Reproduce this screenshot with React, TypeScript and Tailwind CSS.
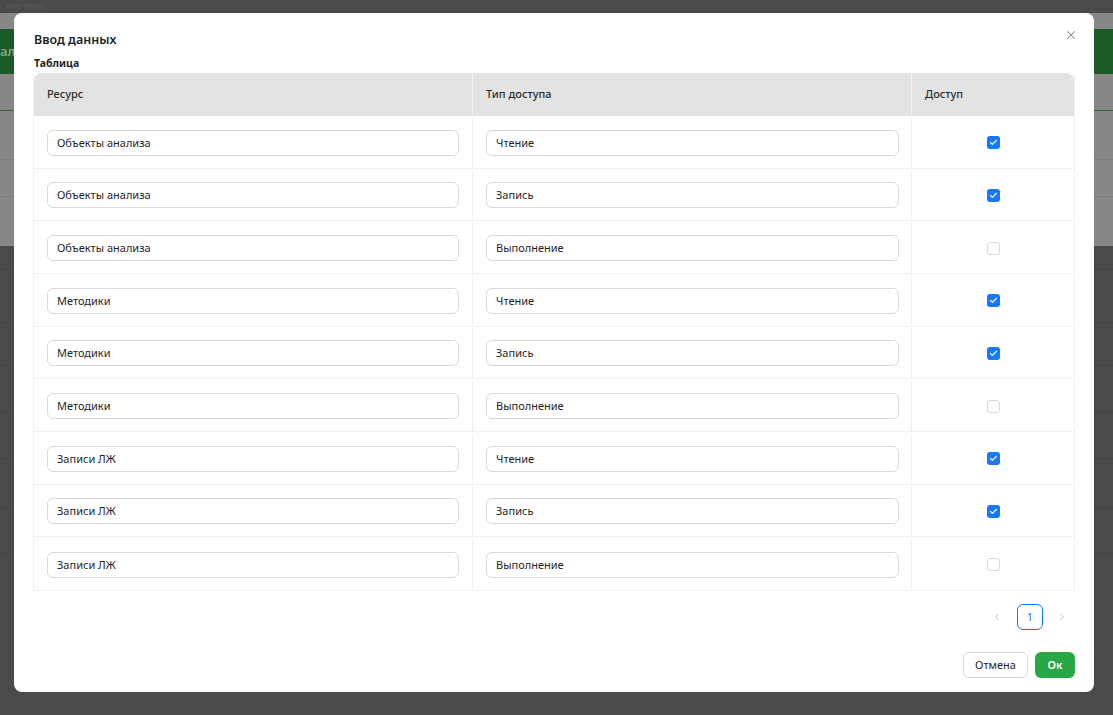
import { X, ChevronLeft, ChevronRight, Check } from "lucide-react";

type Row = { resource: string; access: string; allowed: boolean };

const ROWS: Row[] = [
  { resource: "Объекты анализа", access: "Чтение", allowed: true },
  { resource: "Объекты анализа", access: "Запись", allowed: true },
  { resource: "Объекты анализа", access: "Выполнение", allowed: false },
  { resource: "Методики", access: "Чтение", allowed: true },
  { resource: "Методики", access: "Запись", allowed: true },
  { resource: "Методики", access: "Выполнение", allowed: false },
  { resource: "Записи ЛЖ", access: "Чтение", allowed: true },
  { resource: "Записи ЛЖ", access: "Запись", allowed: true },
  { resource: "Записи ЛЖ", access: "Выполнение", allowed: false },
];

function TextInput({ value }: { value: string }) {
  return (
    <div className="h-[26px] w-full rounded-[6px] border border-[#d9d9d9] bg-white px-[9px] text-[11px] leading-[24px] text-[#1f1f1f]">
      {value}
    </div>
  );
}

function CheckBox({ checked }: { checked: boolean }) {
  return checked ? (
    <span className="flex h-[13px] w-[13px] items-center justify-center rounded-[3px] bg-[#1677ff]">
      <Check className="h-[9px] w-[9px] text-white" strokeWidth={3} />
    </span>
  ) : (
    <span className="h-[13px] w-[13px] rounded-[3px] border border-[#d9d9d9] bg-white" />
  );
}

// dimmed page behind the modal
function Backdrop() {
  return (
    <div className="flex h-full flex-col">
      <div className="h-[13px] overflow-hidden pl-[6px] pt-[1px] text-[9px] leading-[10px] text-[#5c5c5c]">ите поля</div>
      <div className="flex h-[233px] flex-col bg-[#878787]">
        <div className="mt-[16px] flex h-[45px] items-center bg-[#1c5a26] text-[13px] font-semibold text-[#7fa487]">
          ал
        </div>
        <div className="h-[36px]" />
        <div className="h-px bg-[#2e6b37]" />
        <div className="h-[48px]" />
        <div className="h-px bg-[#7a7a7a]" />
        <div className="h-[36px]" />
        <div className="h-px bg-[#7a7a7a]" />
      </div>
      <div className="flex flex-col">
        <div className="h-[23px]" />
        <div className="h-px bg-[#434343]" />
        <div className="h-[52px]" />
        <div className="h-px bg-[#434343]" />
        <div className="h-[42px]" />
        <div className="h-px bg-[#434343]" />
        <div className="h-[46px]" />
        <div className="h-px bg-[#434343]" />
        <div className="h-[45px]" />
        <div className="h-px bg-[#434343]" />
        <div className="h-[48px]" />
        <div className="h-px bg-[#434343]" />
        <div className="h-[45px]" />
        <div className="h-px bg-[#434343]" />
      </div>
    </div>
  );
}

export default function App() {
  return (
    <div
      className="relative h-[715px] w-[1113px] overflow-hidden bg-[#4a4a4a]"
      style={{ fontFamily: '"Noto Sans", "Open Sans", sans-serif' }}
    >
      <Backdrop />

      <div className="absolute left-[14px] top-[13px] flex h-[679px] w-[1080px] flex-col rounded-[8px] bg-white px-[19px] pt-[16px]">
        <button className="absolute right-[16px] top-[15px] text-[#8c8c8c]">
          <X className="h-[14px] w-[14px]" strokeWidth={1.8} />
        </button>

        <div className="h-[22px] pl-px text-[12.5px] font-semibold leading-[22px] text-[#1f1f1f]">Ввод данных</div>
        <div className="mt-[4px] h-[16px] pl-px text-[10.5px] font-bold leading-[16px] text-[#1f1f1f]">Таблица</div>

        <div className="mt-[2px] flex flex-col border-x border-b border-[#f0f0f0]">
          <div className="grid h-[43px] grid-cols-[439px_439px_1fr] rounded-t-[8px] bg-[#e3e3e3] text-[11px] font-medium text-[#2b2b2b]">
            <div className="flex items-center border-r border-[#f2f2f2] px-[13px]">Ресурс</div>
            <div className="flex items-center border-r border-[#f2f2f2] px-[13px]">Тип доступа</div>
            <div className="flex items-center px-[13px]">Доступ</div>
          </div>
          {ROWS.map((row, i) => (
            <div
              key={i}
              className={`grid h-[52.67px] grid-cols-[439px_439px_1fr] pt-[2px] ${i < ROWS.length - 1 ? "border-b border-[#f0f0f0]" : ""}`}
            >
              <div className="flex items-center border-r border-[#f0f0f0] pl-[13px] pr-[13px]">
                <TextInput value={row.resource} />
              </div>
              <div className="flex items-center border-r border-[#f0f0f0] pl-[13px] pr-[12px]">
                <TextInput value={row.access} />
              </div>
              <div className="flex items-center justify-center">
                <CheckBox checked={row.allowed} />
              </div>
            </div>
          ))}
        </div>

        <div className="mt-[13px] flex items-center justify-end">
          <span className="flex h-[26px] w-[26px] items-center justify-center text-[#c4c4c4]">
            <ChevronLeft className="h-[12px] w-[12px]" />
          </span>
          <span className="ml-[7px] mr-[6px] flex h-[26px] w-[26px] items-center justify-center rounded-[6px] border border-[#1677ff] text-[11px] text-[#1677ff]">
            1
          </span>
          <span className="flex h-[26px] w-[26px] items-center justify-center text-[#c4c4c4]">
            <ChevronRight className="h-[12px] w-[12px]" />
          </span>
        </div>

        <div className="mt-[22px] flex justify-end gap-[7px]">
          <button className="h-[26px] w-[65px] rounded-[6px] border border-[#d9d9d9] bg-white text-[11px] text-[#1f1f1f]">
            Отмена
          </button>
          <button className="h-[26px] w-[40px] rounded-[6px] bg-[#28a745] text-[11px] font-semibold text-white">
            Ок
          </button>
        </div>
      </div>
    </div>
  );
}
